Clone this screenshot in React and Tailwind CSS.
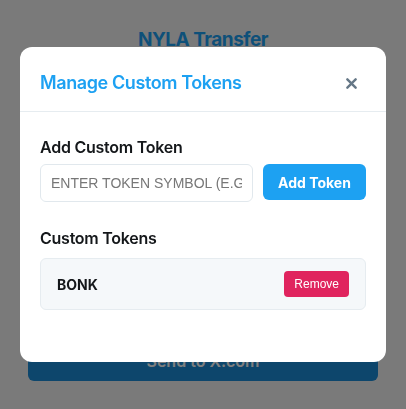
import React, { useState } from "react";

const CloseIcon = () => (
  <svg width="11" height="11" viewBox="0 0 12 12" fill="none">
    <path d="M1.5 1.5l9 9M10.5 1.5l-9 9" stroke="#657786" strokeWidth="2.6" strokeLinecap="round" />
  </svg>
);

const App = () => {
  const [symbol, setSymbol] = useState("");
  const [tokens, setTokens] = useState(["BONK"]);

  const addToken = () => {
    if (!symbol.trim()) return;
    setTokens([...tokens, symbol.trim().toUpperCase()]);
    setSymbol("");
  };

  return (
    <div className="relative h-[409px] w-full overflow-hidden bg-[#f5f5f5] font-['Inter',sans-serif]">
      {/* page behind the modal */}
      <div className="flex h-full flex-col px-7 pt-[26px] pb-[28px]">
        <h1 className="text-center text-[19px] font-bold leading-[28px] tracking-[-0.5px] text-[#1da1f2]">NYLA Transfer</h1>
        <div className="flex-1" />
        <button className="h-[40px] w-full rounded-md bg-[#1a8cd8] text-[16px] font-semibold text-white">
          Send to X.com
        </button>
      </div>

      {/* overlay */}
      <div className="fixed inset-0 flex items-center justify-center bg-black/50 px-5">
        <div className="w-full overflow-hidden rounded-xl bg-white">
          {/* header */}
          <div className="flex items-center justify-between border-b border-[#e6ecf0] px-5 pt-6 pb-4">
            <h2 className="text-[18px] font-semibold leading-6 tracking-[-0.4px] text-[#1da1f2]">Manage Custom Tokens</h2>
            <button className="flex h-6 w-[30px] items-center justify-center">
              <CloseIcon />
            </button>
          </div>

          {/* body */}
          <div className="px-5 pt-[25px] pb-[52px]">
            <h3 className="mb-[7px] text-[16px] font-semibold leading-5 tracking-[-0.25px] text-[#14171a]">Add Custom Token</h3>
            <div className="flex items-start gap-[10px]">
              <input
                value={symbol}
                onChange={(e) => setSymbol(e.target.value)}
                placeholder="ENTER TOKEN SYMBOL (E.G., BONK)"
                className="h-[38px] min-w-0 flex-1 rounded-md border border-[#e1e8ed] px-[10px] font-['Liberation_Sans',sans-serif] text-[14px] text-[#14171a] outline-none placeholder:text-[#777]"
              />
              <button
                onClick={addToken}
                className="h-9 w-[103px] rounded-md bg-[#1da1f2] text-[14px] font-bold text-white"
              >
                Add Token
              </button>
            </div>

            <h3 className="mt-[26px] mb-[10px] text-[16px] font-semibold leading-5 tracking-[-0.25px] text-[#14171a]">Custom Tokens</h3>
            <div className="flex flex-col gap-2">
              {tokens.map((t, i) => (
                <div
                  key={i}
                  className="flex items-center justify-between rounded-md border border-[#e6ecf0] bg-[#f5f8fa] px-4 py-3"
                >
                  <span className="text-[14px] font-bold text-[#14171a]">{t}</span>
                  <button
                    onClick={() => setTokens(tokens.filter((_, j) => j !== i))}
                    className="h-[26px] rounded bg-[#e0245e] px-[10px] font-['Liberation_Sans',sans-serif] text-[12px] text-white"
                  >
                    Remove
                  </button>
                </div>
              ))}
            </div>
          </div>
        </div>
      </div>
    </div>
  );
};

export default App;
